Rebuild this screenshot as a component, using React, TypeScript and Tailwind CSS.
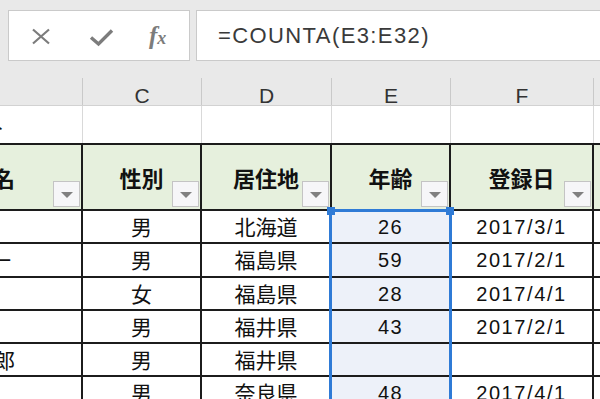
const JP = "font-['Noto_Sans_CJK_JP',sans-serif]"
const NUM = "font-['Liberation_Sans',Arial,sans-serif]"

type Row = {
  h: string
  b: string
  bPad: string
  c: string
  d: string
  e: string
  f: string
}

const rows: Row[] = [
  { h: 'h-[33px]', b: '', bPad: 'pr-[70px]', c: '男', d: '北海道', e: '26', f: '2017/3/1' },
  { h: 'h-[34px]', b: '純一', bPad: 'pr-[70px]', c: '男', d: '福島県', e: '59', f: '2017/2/1' },
  { h: 'h-[33px]', b: '', bPad: 'pr-[70px]', c: '女', d: '福島県', e: '28', f: '2017/4/1' },
  { h: 'h-[33px]', b: '', bPad: 'pr-[70px]', c: '男', d: '福井県', e: '43', f: '2017/2/1' },
  { h: 'h-[33px]', b: '太郎', bPad: 'pr-[66px]', c: '男', d: '福井県', e: '', f: '' },
  { h: 'h-[34px]', b: '', bPad: 'pr-[70px]', c: '男', d: '奈良県', e: '48', f: '2017/4/1' },
]

function FilterButton() {
  return (
    <span className="absolute right-[1px] bottom-[2px] flex h-[26px] w-[27px] items-center justify-center border border-[#c4c4c4] bg-[#f6f6f8]">
      <span className="mt-[1px] h-0 w-0 border-x-[6px] border-t-[6px] border-x-transparent border-t-[#808080]" />
    </span>
  )
}

function FormulaBar() {
  return (
    <div className="flex h-[78px] gap-[6px] bg-[#e9e9e9] pt-[10px] pl-[8px]">
      <div className="relative flex h-[51px] w-[182px] items-center border border-[#cacaca] bg-white">
        {/* cancel */}
        <svg className="absolute top-[17px] left-[22px]" width="20" height="17" viewBox="0 0 20 17">
          <path d="M2 1.5 L18 15.5 M18 1.5 L2 15.5" stroke="#7c7c7c" strokeWidth="2.2" fill="none" />
        </svg>
        {/* enter */}
        <svg className="absolute top-[18px] left-[80px]" width="25" height="18" viewBox="0 0 25 18">
          <path d="M2 8.5 L9.5 15 L23 1.5" stroke="#7c7c7c" strokeWidth="3.4" fill="none" strokeLinejoin="miter" />
        </svg>
        <span className="absolute top-[12px] left-[140px] font-['Liberation_Serif',serif] text-[25px] leading-none font-semibold text-[#7c7c7c] italic">
          f<span className="text-[18px]">x</span>
        </span>
      </div>
      <div className="-mr-[4px] flex h-[51px] flex-1 items-center border border-[#cacaca] bg-white pl-[21px]">
        <span className={`${NUM} text-[22px] tracking-[1.4px] text-[#3a3a3a]`}>=COUNTA(E3:E32)</span>
      </div>
    </div>
  )
}

export default function App() {
  return (
    <div className={`relative h-[399px] w-[600px] overflow-hidden bg-white ${JP}`}>
      <FormulaBar />

      {/* column letters */}
      <div className={`flex h-[28px] border-b border-[#d2d2d2] bg-[#e9e9e9] ${NUM} text-[21px] leading-none text-[#333]`}>
        <div className="w-[83px] shrink-0 border-r border-[#c9c9c9]" />
        <div className="flex w-[119px] shrink-0 justify-center border-r border-[#c9c9c9] pt-[7px]">C</div>
        <div className="flex w-[130px] shrink-0 justify-center border-r border-[#c9c9c9] pt-[7px]">D</div>
        <div className="flex w-[119px] shrink-0 justify-center border-r border-[#c9c9c9] pt-[7px]">E</div>
        <div className="flex w-[143px] shrink-0 justify-center border-r border-[#c9c9c9] pt-[7px]">F</div>
        <div className="flex-1" />
      </div>

      {/* title row */}
      <div className="flex h-[37px] text-[21px] text-[#111]">
        <div className="flex w-[83px] shrink-0 items-center justify-end overflow-hidden border-r border-[#d9d9d9] pt-[5px] pr-[77px] whitespace-nowrap">
          顧客リスト
        </div>
        <div className="w-[119px] shrink-0 border-r border-[#d9d9d9]" />
        <div className="w-[130px] shrink-0 border-r border-[#d9d9d9]" />
        <div className="w-[119px] shrink-0 border-r border-[#d9d9d9]" />
        <div className="w-[143px] shrink-0 border-r border-[#d9d9d9]" />
        <div className="flex-1" />
      </div>

      {/* table header */}
      <div className="flex h-[68px] border-y-2 border-[#1c1c1c] bg-[#e6f0dd] text-[22px] font-bold text-[#111]">
        <div className="relative flex w-[83px] shrink-0 items-center justify-end overflow-hidden border-r-2 border-[#1c1c1c] pr-[66px] whitespace-nowrap">
          氏名
          <FilterButton />
        </div>
        <div className="relative flex w-[119px] shrink-0 items-center justify-center border-r-2 border-[#1c1c1c]">
          性別
          <FilterButton />
        </div>
        <div className="relative flex w-[130px] shrink-0 items-center justify-center border-r-2 border-[#1c1c1c]">
          居住地
          <FilterButton />
        </div>
        <div className="relative flex w-[119px] shrink-0 items-center justify-center border-r-2 border-[#1c1c1c]">
          年齢
          <FilterButton />
        </div>
        <div className="relative flex w-[143px] shrink-0 items-center justify-center border-r-2 border-[#1c1c1c]">
          登録日
          <FilterButton />
        </div>
        <div className="flex-1" />
      </div>

      {/* data rows */}
      {rows.map((r, i) => (
        <div key={i} className={`flex ${r.h} border-b-2 border-[#1c1c1c] text-[21px] text-[#111]`}>
          <div className={`flex w-[83px] shrink-0 items-center justify-end overflow-hidden border-r-2 border-[#1c1c1c] ${r.bPad} whitespace-nowrap`}>
            {r.b}
          </div>
          <div className="flex w-[119px] shrink-0 items-center justify-center border-r-2 border-[#1c1c1c]">{r.c}</div>
          <div className="flex w-[130px] shrink-0 items-center justify-center border-r-2 border-[#1c1c1c]">{r.d}</div>
          <div className={`flex w-[119px] shrink-0 items-center justify-center border-r-2 border-[#1c1c1c] bg-[#edf1f9] ${NUM} text-[20px] tracking-[1.5px]`}>
            {r.e}
          </div>
          <div className={`flex w-[143px] shrink-0 items-center justify-center border-r-2 border-[#1c1c1c] ${NUM} text-[20px] tracking-[1.6px]`}>
            {r.f}
          </div>
          <div className="flex-1" />
        </div>
      ))}

      {/* selection of E3:E32 */}
      <div className="pointer-events-none absolute top-[209px] left-[329px] h-[220px] w-[123px] border-[3px] border-[#2f7bd6]" />
      <div className="absolute top-[207px] left-[327px] h-[8px] w-[8px] bg-[#2f7bd6]" />
      <div className="absolute top-[207px] left-[446px] h-[8px] w-[8px] bg-[#2f7bd6]" />
    </div>
  )
}
